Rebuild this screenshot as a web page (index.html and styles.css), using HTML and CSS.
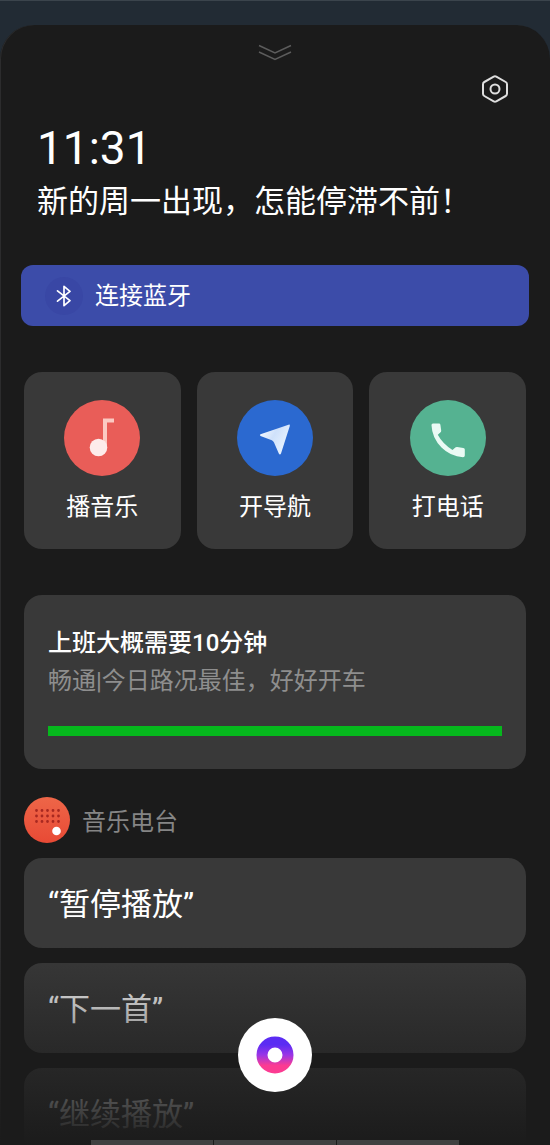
FILE: index.html
```html
<!DOCTYPE html>
<html lang="zh-CN">
<head>
<meta charset="utf-8">
<meta name="viewport" content="width=device-width, initial-scale=1">
<title>驾驶助手</title>
<link rel="stylesheet" href="styles.css">
</head>
<body>
<div class="screen">
  <main class="sheet">
    <div class="grip">
      <svg width="34" height="18" viewBox="0 0 34 18" fill="none" stroke="#5c5c5c" stroke-width="1.5" aria-hidden="true">
        <path d="M1 2.500 17 10 33 2.500M1 9 17 16.500 33 9"/>
      </svg>
    </div>
    <div class="toolbar">
      <button class="settings" type="button" aria-label="设置">
        <svg width="30" height="30" viewBox="0 0 30 30" fill="none" stroke="#dedede" stroke-width="2" stroke-linejoin="round" aria-hidden="true">
          <path d="M13.7 2.7Q15 2 16.300 2.700L25.700 8Q27 8.700 27 10.200V19.800Q27 21.300 25.700 22L16.300 27.300Q15 28 13.700 27.300L4.300 22Q3 21.300 3 19.800V10.200Q3 8.700 4.300 8Z"/>
          <circle cx="15" cy="15" r="4.500"/>
        </svg>
      </button>
    </div>
    <header class="greeting">
      <time class="clock">11:31</time>
      <h1 class="message">新的周一出现，怎能停滞不前！</h1>
    </header>
    <button class="bluetooth" type="button">
      <span class="bluetooth-icon">
        <svg width="16" height="22" viewBox="0 0 16 22" fill="none" stroke="#fff" stroke-width="1.700" stroke-linejoin="round" stroke-linecap="round" aria-hidden="true">
          <path d="M1.500 5.800 14 15.600 8 20.700V1.300L14 6.400 1.500 16.200"/>
        </svg>
      </span>
      连接蓝牙
    </button>
    <nav class="actions">
      <button class="action" type="button">
        <svg class="action-icon" viewBox="0 0 76 76" aria-hidden="true">
          <circle cx="38" cy="38" r="38" fill="#e95d58"/>
          <path d="M39 18.500H50V22.500H43V46H39Z" fill="#fbc9c2"/>
          <circle cx="34.500" cy="47.500" r="8.800" fill="#fdebea"/>
        </svg>
        播音乐
      </button>
      <button class="action" type="button">
        <svg class="action-icon" viewBox="0 0 76 76" aria-hidden="true">
          <defs>
            <linearGradient id="plane" x1="0" y1="0" x2="1" y2="0.600">
              <stop offset="0" stop-color="#fff"/>
              <stop offset="0.500" stop-color="#cfe1fb"/>
              <stop offset="1" stop-color="#e9f4ff"/>
            </linearGradient>
          </defs>
          <circle cx="38" cy="38" r="38" fill="#2b69d0"/>
          <path d="M23.500 34.300 51.500 24.700Q53.200 24.200 52.800 26L44 53.500Q43 55.500 41.800 53.500L37 42.500Q36.300 41 34.800 40.300L23.500 36Q22.300 35 23.500 34.300Z" fill="url(#plane)"/>
        </svg>
        开导航
      </button>
      <button class="action" type="button">
        <svg class="action-icon" viewBox="0 0 76 76" aria-hidden="true">
          <circle cx="38" cy="38" r="38" fill="#55b291"/>
          <path d="M23 23.500H29Q30.200 23.500 30.400 24.800L31.200 30.500Q31.300 31.800 30.300 32.600L27.800 34.700Q32.500 43.500 42.500 50L45.300 47.600Q46 47 47.200 47.100L53.300 47.900Q54.800 48.100 54.800 49.500V55.500Q54.800 57.200 53 57.200Q40.500 56.500 31.500 47.500Q22 38 21.500 25.300Q21.400 23.500 23 23.500Z" fill="#eafaf4"/>
        </svg>
        打电话
      </button>
    </nav>
    <section class="traffic">
      <h2 class="traffic-title">上班大概需要10分钟</h2>
      <p class="traffic-note">畅通|今日路况最佳，好好开车</p>
      <div class="traffic-bar"></div>
    </section>
    <section class="radio">
      <h2 class="radio-title">
        <svg width="46" height="46" viewBox="0 0 46 46" aria-hidden="true">
          <defs>
            <linearGradient id="radio" x1="0" y1="0" x2="0" y2="1">
              <stop offset="0" stop-color="#ee6648"/>
              <stop offset="1" stop-color="#e84a35"/>
            </linearGradient>
          </defs>
          <circle cx="23" cy="23" r="23" fill="url(#radio)"/>
          <path d="M12.500 13.500H36M12.500 19H36M12.500 24.500H36" fill="none" stroke="#a82820" stroke-width="2.800" stroke-linecap="round" stroke-dasharray="0 5.500"/>
          <circle cx="32.500" cy="34" r="4.300" fill="#fff"/>
        </svg>
        <span class="radio-name">音乐电台</span>
      </h2>
      <div class="commands">
        <button class="command" type="button">“暂停播放”</button>
        <button class="command" type="button">“下一首”</button>
        <button class="command" type="button">“继续播放”</button>
      </div>
    </section>
  </main>
  <div class="fade"></div>
  <div class="dock">
    <button class="assistant" type="button" aria-label="语音助手">
      <svg width="38" height="38" viewBox="0 0 38 38" aria-hidden="true">
        <defs>
          <linearGradient id="ring" x1="0" y1="0" x2="0" y2="1">
            <stop offset="0.100" stop-color="#5b2cf3"/>
            <stop offset="0.500" stop-color="#9a35e6"/>
            <stop offset="0.900" stop-color="#fb3b92"/>
          </linearGradient>
        </defs>
        <circle cx="19" cy="19" r="13" fill="none" stroke="url(#ring)" stroke-width="11"/>
      </svg>
    </button>
    <div class="strip"><span></span><span></span><span></span></div>
  </div>
</div>
</body>
</html>
```
FILE: styles.css
```css
* {
  box-sizing: border-box;
}

body {
  margin: 0;
  background: #1b1b1b;
  color: #fff;
  font-family: Roboto, "Noto Sans CJK SC", sans-serif;
  font-size: 24px;
  line-height: 32px;
}

button {
  border: 0;
  padding: 0;
  background: none;
  color: inherit;
  font: inherit;
  cursor: pointer;
}

h1,
h2,
p {
  margin: 0;
  font-size: 24px;
  font-weight: 400;
}

svg {
  display: block;
  flex: none;
}

.screen {
  position: relative;
  height: 100vh;
  overflow: hidden;
  padding-top: 24px;
  border-top: 1px solid #3b444c;
  background: #222b34;
}

.sheet {
  min-height: 100%;
  padding: 18px 24px 0;
  border-radius: 34px 34px 0 0;
  background: #1b1b1b;
  box-shadow: inset 1px 0 #2c2c2d;
}

.grip {
  display: flex;
  justify-content: center;
}

.toolbar {
  display: flex;
  justify-content: flex-end;
  padding: 13px 16px 0;
}

.greeting {
  padding: 16px 13px 0;
}

.clock {
  display: block;
  font-size: 46px;
  line-height: 56px;
}

.message {
  margin-top: 4px;
  font-size: 31px;
  line-height: 44px;
}

.bluetooth {
  display: flex;
  align-items: center;
  gap: 12px;
  width: calc(100% + 6px);
  height: 61px;
  margin: 41px -3px 0;
  padding: 1px 24px 0;
  border-radius: 12px;
  background: #3c4ca9;
}

.bluetooth-icon {
  display: flex;
  align-items: center;
  justify-content: center;
  width: 38px;
  height: 38px;
  border-radius: 50%;
  background: #3947a5;
}

.actions {
  display: grid;
  grid-template-columns: repeat(3, 1fr);
  gap: 16px;
  margin-top: 46px;
}

.action {
  display: flex;
  flex-direction: column;
  align-items: center;
  gap: 15px;
  padding: 28px 0 26px;
  border-radius: 18px;
  background: #393939;
}

.action-icon {
  width: 76px;
  height: 76px;
}

.traffic {
  margin-top: 46px;
  padding: 32px 24px 33px;
  border-radius: 18px;
  background: #393939;
}

.traffic-title {
  font-weight: 500;
}

.traffic-note {
  margin-top: 6px;
  color: #8e8e8e;
}

.traffic-bar {
  height: 10px;
  margin-top: 29px;
  background: #06b81d;
}

.radio {
  margin-top: 28px;
}

.radio-title {
  display: flex;
  align-items: center;
  gap: 12px;
  color: #858585;
}

.radio-name {
  padding-top: 3px;
}

.commands {
  display: grid;
  gap: 15px;
  margin-top: 15px;
}

.command {
  height: 90px;
  padding: 4px 24px 0;
  border-radius: 18px;
  background: #393939;
  font-size: 31px;
  text-align: left;
}

.fade {
  position: absolute;
  right: 0;
  bottom: 0;
  left: 0;
  height: 200px;
  background: linear-gradient(rgba(27, 27, 27, 0), #1b1b1b);
  pointer-events: none;
}

.dock {
  position: absolute;
  right: 0;
  bottom: 0;
  left: 0;
  display: flex;
  flex-direction: column;
  align-items: center;
  gap: 48px;
}

.assistant {
  display: flex;
  align-items: center;
  justify-content: center;
  width: 74px;
  height: 74px;
  border-radius: 50%;
  background: #fff;
}

.strip {
  display: grid;
  grid-template-columns: repeat(3, 1fr);
  gap: 1px;
  width: 67%;
  height: 5px;
}

.strip span {
  background: #404040;
}
```
